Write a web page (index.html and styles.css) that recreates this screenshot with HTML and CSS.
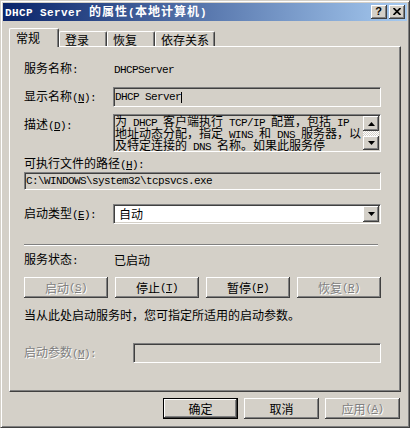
FILE: index.html
```html
<!DOCTYPE html>
<html>
<head>
<meta charset="utf-8">
<title>DHCP Server 的属性</title>
<link rel="stylesheet" href="styles.css">
</head>
<body>
<div class="window">
  <div class="titlebar">
    <div class="title"><span class="tl">DHCP Server </span>的属性<span class="tl">(</span>本地计算机<span class="tl">)</span></div>
    <div class="caps">
      <div class="cap"><span class="q">?</span></div>
      <div class="cap"><svg width="8" height="7" viewBox="0 0 8 7"><path d="M0.5 0 L7.5 7 M7.5 0 L0.5 7" stroke="#000" stroke-width="1.7" fill="none"/></svg></div>
    </div>
  </div>

  <div class="tabs">
    <div class="tab sel w1">常规</div>
    <div class="tab w2">登录</div>
    <div class="tab w3">恢复</div>
    <div class="tab w4">依存关系</div>
  </div>

  <div class="panel">
    <div class="row r-name">
      <div class="lbl">服务名称<span class="m">:</span></div>
      <div class="val"><span class="m">DHCPServer</span></div>
    </div>

    <div class="row r-disp">
      <div class="lbl">显示名称<span class="m">(<u>N</u>):</span></div>
      <div class="box sunk disp"><span class="m">DHCP Server</span><span class="caret"></span></div>
    </div>

    <div class="row r-desc">
      <div class="lbl lbl-top">描述<span class="m">(<u>D</u>):</span></div>
      <div class="box sunk desc">
        <div class="txt">
          <div class="ln">为<span class="m"> DHCP </span>客户端执行<span class="m"> TCP/IP </span>配置，包括<span class="m"> IP</span></div>
          <div class="ln">地址动态分配，指定<span class="m"> WINS </span>和<span class="m"> DNS </span>服务器，以</div>
          <div class="ln">及特定连接的<span class="m"> DNS </span>名称。如果此服务停</div>
        </div>
        <div class="sb">
          <div class="sbtn up raised"><svg width="7" height="4" viewBox="0 0 7 4"><path d="M3.5 0 L7 4 L0 4 Z" fill="#000"/></svg></div>
          <div class="track"></div>
          <div class="sbtn dn raised"><svg width="7" height="4" viewBox="0 0 7 4"><path d="M0 0 L7 0 L3.5 4 Z" fill="#000"/></svg></div>
        </div>
      </div>
    </div>

    <div class="r-pathlbl">可执行文件的路径<span class="m">(<u>H</u>):</span></div>
    <div class="box sunk path"><span class="m">C:\WINDOWS\system32\tcpsvcs.exe</span></div>

    <div class="row r-type">
      <div class="lbl">启动类型<span class="m">(<u>E</u>):</span></div>
      <div class="box sunk combo">
        <div class="ctext">自动</div>
        <div class="dd raised"><svg width="7" height="4" viewBox="0 0 7 4"><path d="M0 0 L7 0 L3.5 4 Z" fill="#000"/></svg></div>
      </div>
    </div>

    <div class="sep"></div>

    <div class="row r-status">
      <div class="lbl">服务状态<span class="m">:</span></div>
      <div class="val">已启动</div>
    </div>

    <div class="btnrow">
      <div class="btn raised dis">启动<span class="m">(<u>S</u>)</span></div>
      <div class="btn raised">停止<span class="m">(<u>T</u>)</span></div>
      <div class="btn raised">暂停<span class="m">(<u>P</u>)</span></div>
      <div class="btn raised dis">恢复<span class="m">(<u>R</u>)</span></div>
    </div>

    <div class="hint">当从此处启动服务时，您可指定所适用的启动参数。</div>

    <div class="row r-param">
      <div class="lbl lbl-wide dis">启动参数<span class="m">(<u>M</u>):</span></div>
      <div class="box sunk param"></div>
    </div>
  </div>

  <div class="footer">
    <div class="btn fbtn def">确定</div>
    <div class="btn fbtn raised">取消</div>
    <div class="btn fbtn raised dis">应用<span class="m">(<u>A</u>)</span></div>
  </div>
</div>
</body>
</html>
```

FILE: styles.css
```css
* { box-sizing: border-box; }
html, body { margin: 0; padding: 0; background: #d4d0c8; }
body {
  font-family: "Noto Sans CJK SC", sans-serif;
  font-size: 12px;
  line-height: 12px;
  color: #000;
}
u { text-decoration: underline; text-underline-offset: 1px; }

.m {
  font-family: "Liberation Mono", "Noto Sans CJK SC", monospace;
  font-size: 11px;
  letter-spacing: -0.6px;
  white-space: pre;
}

.window {
  width: 410px;
  height: 428px;
  background: #d4d0c8;
  border: 1px solid;
  border-color: #d4d0c8 #404040 #404040 #d4d0c8;
  box-shadow: inset 1px 1px #fff, inset -1px -1px #808080;
  padding: 2px;
  display: flex;
  flex-direction: column;
}

/* title bar */
.titlebar {
  height: 18px;
  flex: none;
  background: linear-gradient(to right, #0a246a, #a6caf0);
  display: flex;
  align-items: center;
  justify-content: space-between;
  padding: 0 2px;
}
.title {
  color: #fff;
  font-weight: bold;
  letter-spacing: 1px;
  white-space: nowrap;
}
.tl {
  font-family: "Liberation Mono", monospace;
  font-size: 11px;
  letter-spacing: 0.4px;
  white-space: pre;
}
.caps { display: flex; gap: 2px; }
.cap {
  width: 16px;
  height: 14px;
  background: #d4d0c8;
  box-shadow: inset -1px -1px #404040, inset 1px 1px #fff, inset -2px -2px #808080;
  display: flex;
  align-items: center;
  justify-content: center;
}
.cap svg { display: block; margin: 0 1px 1px 0; }
.q {
  font-family: "Liberation Sans", sans-serif;
  font-weight: bold;
  font-size: 11px;
  line-height: 11px;
  margin: 0 1px 1px 0;
}

/* tabs */
.tabs {
  flex: none;
  display: flex;
  align-items: flex-end;
  height: 18px;
  margin: 7px 6px 0 6px;
  position: relative;
  z-index: 1;
}
.tab {
  height: 15px;
  background: #d4d0c8;
  border-top: 1px solid #fff;
  border-left: 1px solid #fff;
  border-right: 1px solid #404040;
  box-shadow: inset -1px 0 #808080;
  border-radius: 2px 2px 0 0;
  padding: 1px 0 0 5px;
  line-height: 13px;
  white-space: nowrap;
}
.tab.sel {
  height: 19px;
  margin-bottom: -1px;
  padding: 2px 0 0 6px;
  line-height: 14px;
}
.w1 { width: 50px; }
.w2 { width: 48px; }
.w3 { width: 48px; }
.w4 { width: 60px; }

/* panel */
.panel {
  flex: none;
  height: 346px;
  margin: 0 6px;
  border-top: 1px solid #fff;
  border-left: 1px solid #fff;
  border-right: 1px solid #404040;
  border-bottom: 1px solid #404040;
  box-shadow: inset -1px -1px #808080;
  padding: 16px 19px 0 14px;
}

.row { display: flex; align-items: center; }
.lbl { width: 89px; flex: none; white-space: nowrap; }
.lbl-top { align-self: flex-start; padding-top: 4px; }
.lbl-wide { width: 109px; }
.val { padding-left: 1px; white-space: nowrap; }

.sunk {
  border: 1px solid;
  border-color: #808080 #fff #fff #808080;
  box-shadow: inset 1px 1px #404040, inset -1px -1px #d4d0c8;
}
.raised {
  background: #d4d0c8;
  box-shadow: inset -1px -1px #404040, inset 1px 1px #fff, inset -2px -2px #808080;
}
.box { flex: 1; background: #d4d0c8; }

.r-name { height: 12px; }

.r-disp { margin-top: 12px; }
.disp {
  height: 20px;
  display: flex;
  align-items: center;
  padding-left: 1px;
  white-space: nowrap;
}
.caret {
  display: inline-block;
  width: 1px;
  height: 11px;
  background: #000;
}

.r-desc { margin-top: 7px; align-items: flex-start; }
.desc {
  height: 38px;
  display: flex;
  padding: 1px;
}
.desc .txt {
  flex: 1;
  margin-top: -1px;
}
.ln { height: 12px; white-space: nowrap; }
.sb { width: 16px; flex: none; display: flex; flex-direction: column; }
.sbtn { display: flex; align-items: center; justify-content: center; flex: none; }
.sbtn svg { display: block; }
.sbtn.up { height: 15px; }
.sbtn.dn { height: 14px; }
.track {
  flex: 1;
  background: repeating-conic-gradient(#fff 0 25%, #d4d0c8 0 50%) 0 0 / 2px 2px;
}

.r-pathlbl { margin-top: 5px; height: 12px; white-space: nowrap; }
.path {
  margin-top: 3px;
  height: 18px;
  display: flex;
  align-items: center;
  padding-left: 1px;
  white-space: nowrap;
}

.r-type { margin-top: 14px; }
.combo {
  height: 20px;
  background: #fff;
  display: flex;
  align-items: center;
  padding: 1px;
}
.ctext { flex: 1; padding-left: 4px; }
.dd {
  width: 16px;
  height: 16px;
  flex: none;
  display: flex;
  align-items: center;
  justify-content: center;
}
.dd svg { display: block; }

.sep {
  margin-top: 20px;
  width: 354px;
  height: 2px;
  border-top: 1px solid #808080;
  border-bottom: 1px solid #fff;
}

.r-status { margin-top: 8px; height: 12px; }

.btnrow {
  margin-top: 11px;
  display: grid;
  grid-template-columns: repeat(4, 1fr);
  column-gap: 7px;
}
.btn {
  height: 21px;
  display: flex;
  align-items: center;
  justify-content: center;
  white-space: nowrap;
  background: #d4d0c8;
}
.dis { color: #808080; text-shadow: 1px 1px 0 #fff; }

.hint { margin-top: 11px; height: 12px; white-space: nowrap; }

.r-param { margin-top: 22px; }
.param { height: 20px; }

/* footer */
.footer {
  flex: none;
  display: flex;
  justify-content: flex-end;
  gap: 6px;
  margin-top: 6px;
  padding-right: 7px;
}
.fbtn { width: 75px; }
.def {
  box-shadow: inset 0 0 0 1px #000, inset -2px -2px #404040, inset 2px 2px #fff, inset -3px -3px #808080;
}
```
